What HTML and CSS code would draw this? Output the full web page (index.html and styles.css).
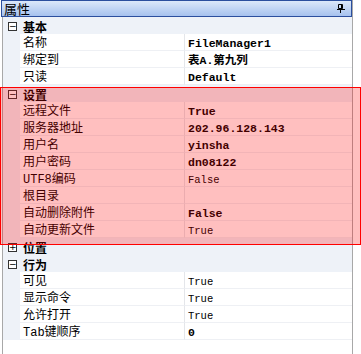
FILE: index.html
```html
<!DOCTYPE html>
<html lang="zh-CN">
<head>
    <meta charset="UTF-8">
    <title>属性</title>
    <link rel="stylesheet" href="styles.css">
</head>
<body>
    <div class="panel">
        <div class="title-bar">
            <span class="title">属性</span>
            <svg class="pin" width="8" height="9" viewBox="0 0 8 9">
                <path d="M1.5 0.5h4v4h-4z M4.5 0.5v4" fill="none" stroke="#000" stroke-width="1"/>
                <path d="M0 5.5h8 M3.5 5.5v3.5" fill="none" stroke="#000" stroke-width="1"/>
            </svg>
        </div>
        <div class="grid">
            <div class="row category">
                <span class="toggle">−</span><span class="cat-name">基本</span>
            </div>
            <div class="row"><span class="gutter"></span><span class="name">名称</span><span class="value bold">FileManager1</span></div>
            <div class="row"><span class="gutter"></span><span class="name">绑定到</span><span class="value bold">表A.第九列</span></div>
            <div class="row"><span class="gutter"></span><span class="name">只读</span><span class="value bold">Default</span></div>

            <div class="row category">
                <span class="toggle">−</span><span class="cat-name">设置</span>
            </div>
            <div class="row"><span class="gutter"></span><span class="name">远程文件</span><span class="value bold">True</span></div>
            <div class="row"><span class="gutter"></span><span class="name">服务器地址</span><span class="value bold">202.96.128.143</span></div>
            <div class="row"><span class="gutter"></span><span class="name">用户名</span><span class="value bold">yinsha</span></div>
            <div class="row"><span class="gutter"></span><span class="name">用户密码</span><span class="value bold">dn08122</span></div>
            <div class="row"><span class="gutter"></span><span class="name">UTF8编码</span><span class="value">False</span></div>
            <div class="row"><span class="gutter"></span><span class="name">根目录</span><span class="value"></span></div>
            <div class="row"><span class="gutter"></span><span class="name">自动删除附件</span><span class="value bold">False</span></div>
            <div class="row"><span class="gutter"></span><span class="name">自动更新文件</span><span class="value">True</span></div>

            <div class="row category">
                <span class="toggle">+</span><span class="cat-name">位置</span>
            </div>

            <div class="row category">
                <span class="toggle">−</span><span class="cat-name">行为</span>
            </div>
            <div class="row"><span class="gutter"></span><span class="name">可见</span><span class="value">True</span></div>
            <div class="row"><span class="gutter"></span><span class="name">显示命令</span><span class="value">True</span></div>
            <div class="row"><span class="gutter"></span><span class="name">允许打开</span><span class="value">True</span></div>
            <div class="row"><span class="gutter"></span><span class="name">Tab键顺序</span><span class="value bold">0</span></div>
        </div>
    </div>
    <!-- annotation box over the 设置 group -->
    <div class="highlight"></div>
</body>
</html>
```

FILE: styles.css
```css
body {
    margin: 0;
    background: #fff;
    font-family: "Liberation Mono", "Noto Sans CJK SC", monospace;
    font-size: 12px;
    color: #000;
}

.panel {
    width: 352px;
    height: 354px;
    margin-left: 1px;
    border-right: 1px solid #a8a8a8;
    box-sizing: border-box;
}

.title-bar {
    height: 17px;
    box-sizing: border-box;
    border: 1px solid #2b4f9e;
    background: linear-gradient(#dce8fa, #a6c2ee);
    display: flex;
    align-items: center;
    justify-content: space-between;
    padding: 0 6px 0 2px;
}
.title {
    font-family: "Noto Sans CJK SC", sans-serif;
    font-size: 13px;
    line-height: 15px;
}
.pin {
    display: block;
}

.grid {
    border-left: 1px solid #a8a8a8;
    margin-left: 1px;
    height: 337px;
}

.row {
    display: flex;
    height: 17px;
}
.category {
    background: #eef2f8;
    align-items: center;
}
.toggle {
    width: 7px;
    height: 7px;
    border: 1px solid #333;
    margin: 1px 6px 0 5px;
    font-family: "DejaVu Sans", sans-serif;
    font-size: 9px;
    line-height: 7px;
    text-align: center;
    background: #fff;
}
.cat-name {
    font-family: "Noto Sans CJK SC", sans-serif;
    font-weight: bold;
    font-size: 12px;
    line-height: 17px;
    padding-top: 1px;
}
.gutter {
    width: 17px;
    background: #eef2f8;
}
.name, .value {
    box-sizing: border-box;
    height: 17px;
    padding: 3px 0 0 3px;
    border-bottom: 1px solid #eef0f4;
    line-height: 14px;
    white-space: nowrap;
    font-family: "Liberation Mono", "Noto Sans CJK SC", monospace;
}
.name {
    width: 165px;
    border-right: 1px solid #e4e6ea;
    font-size: 12px;
}
.value {
    flex: 1;
    font-size: 10.5px;
}
.value.bold {
    font-weight: bold;
    font-size: 11.5px;
}

.highlight {
    position: absolute;
    left: 0;
    top: 87px;
    width: 361px;
    height: 158px;
    box-sizing: border-box;
    border: 1px solid #f00;
    background: rgba(255, 0, 0, 0.25);
}
```
